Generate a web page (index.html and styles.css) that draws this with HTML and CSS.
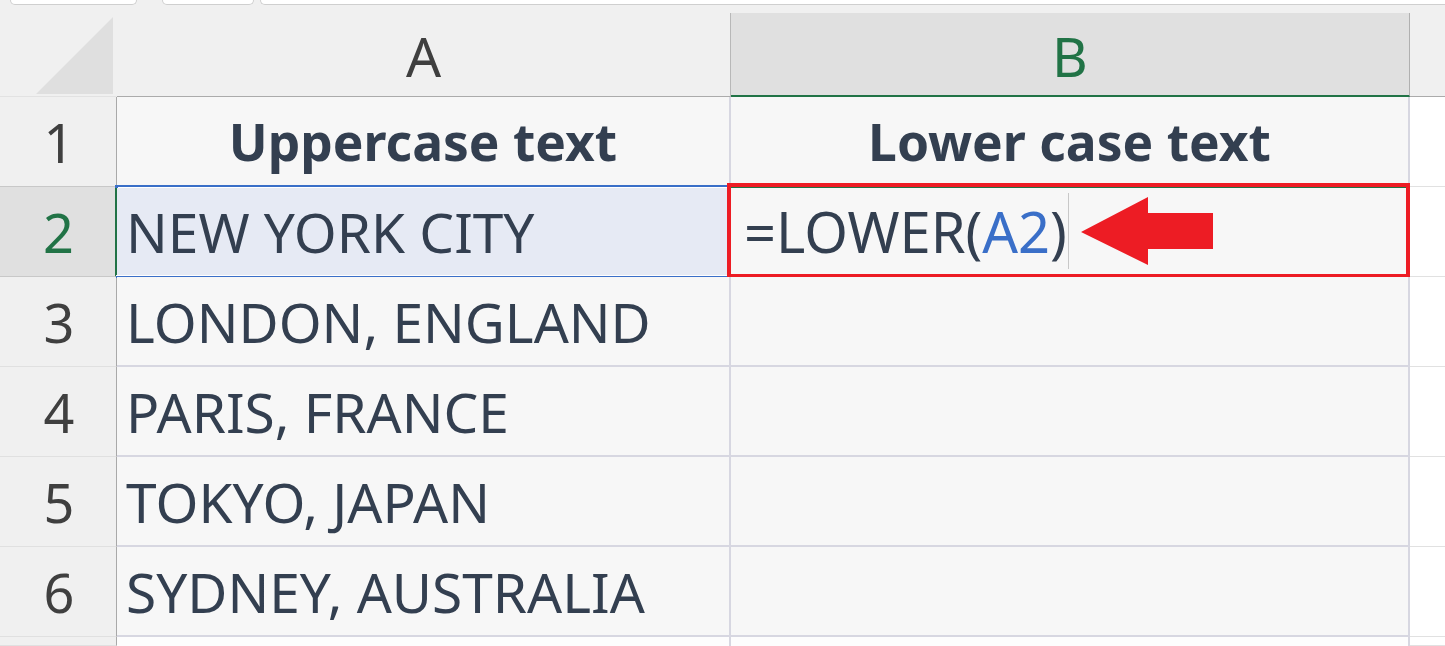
FILE: index.html
```html
<!DOCTYPE html>
<html lang="en">
<head>
<meta charset="utf-8">
<title>LOWER function</title>
<link rel="stylesheet" href="styles.css">
</head>
<body>
<div class="tabs">
  <div class="tab tab-1"></div>
  <div class="tab tab-2"></div>
  <div class="tab tab-3"></div>
</div>
<div class="sheet">
  <div class="corner"><div class="tri"></div></div>
  <div class="colhead">A</div>
  <div class="colhead active">B</div>
  <div class="colhead rest"></div>

  <div class="rowhead">1</div>
  <div class="cell bold center">Uppercase text</div>
  <div class="cell bold center">Lower case text</div>
  <div class="cell out"></div>

  <div class="rowhead active">2</div>
  <div class="cell sel">NEW YORK CITY</div>
  <div class="cell edit">
    <span class="formula">=LOWER(<span class="ref">A2</span>)</span>
    <span class="caret"></span>
    <svg class="arrow" width="132" height="68" viewBox="0 0 132 68"><polygon points="0,35 67,0 67,16 132,16 132,52 67,52 67,68" fill="#ed1c24"/></svg>
  </div>
  <div class="cell out"></div>

  <div class="rowhead">3</div>
  <div class="cell">LONDON, ENGLAND</div>
  <div class="cell"></div>
  <div class="cell out"></div>

  <div class="rowhead">4</div>
  <div class="cell">PARIS, FRANCE</div>
  <div class="cell"></div>
  <div class="cell out"></div>

  <div class="rowhead">5</div>
  <div class="cell">TOKYO, JAPAN</div>
  <div class="cell"></div>
  <div class="cell out"></div>

  <div class="rowhead">6</div>
  <div class="cell">SYDNEY, AUSTRALIA</div>
  <div class="cell"></div>
  <div class="cell out"></div>

  <div class="rowhead"></div>
  <div class="cell blank"></div>
  <div class="cell blank"></div>
  <div class="cell out"></div>
</div>
</body>
</html>
```
FILE: styles.css
```css
* { box-sizing: border-box; }
html, body {
  margin: 0;
  padding: 0;
  background: #f0f0f0;
  overflow: hidden;
  height: 646px;
}
body {
  font-family: "Noto Sans", "Open Sans", sans-serif;
  color: #333f50;
}
.tabs {
  display: flex;
  height: 5px;
  margin-bottom: 8px;
}
.tab {
  height: 5px;
  background: #ffffff;
  border: 1px solid #cfcfcf;
  border-top: none;
  border-radius: 0 0 5px 5px;
}
.tab-1 { margin-left: 10px; width: 127px; }
.tab-2 { margin-left: 25px; width: 92px; }
.tab-3 { margin-left: 6px; flex: 1; border-right: none; border-radius: 0 0 0 5px; }

.sheet {
  display: grid;
  grid-template-columns: 117px 614px 679px 1fr;
  grid-template-rows: 84px repeat(6, 90px) 1fr;
  height: 633px;
}
.corner {
  display: flex;
  justify-content: flex-end;
  align-items: flex-end;
  padding: 0 3px 2px 0;
  border-right: 1px solid transparent;
  border-bottom: 1px solid #e2e2e2;
}
.tri {
  width: 77px;
  height: 77px;
  background: #dfdfdf;
  clip-path: polygon(100% 0, 100% 100%, 0 100%);
}
.colhead {
  display: flex;
  align-items: center;
  justify-content: center;
  font-size: 55px;
  color: #3f3f3f;
  background: #f0f0f0;
  border-right: 1px solid #b8b8b8;
  border-bottom: 1px solid #ababab;
  padding-top: 2px;
}
.colhead.active {
  background: #e0e0e0;
  color: #217346;
  border-bottom: 2px solid #217346;
  border-right-color: #b0b0b0;
}
.colhead.rest { border-right: none; }

.rowhead {
  display: flex;
  align-items: center;
  justify-content: center;
  font-size: 54px;
  color: #3f3f3f;
  background: #f0f0f0;
  border-right: 1px solid #a9a9a9;
  border-bottom: 1px solid #e0e0e0;
  padding-left: 2px;
}
.rowhead.active {
  background: #e0e0e0;
  color: #217346;
  border-right: 2px solid #217346;
  border-bottom-color: #c8c8c8;
}
.sheet > .rowhead:nth-child(5) { border-bottom-color: #c8c8c8; }

.cell {
  position: relative;
  display: flex;
  align-items: center;
  padding-left: 9px;
  font-size: 55px;
  background: #f7f7f7;
  border-right: 2px solid #d7d7e1;
  border-bottom: 2px solid #d7d7e1;
  white-space: nowrap;
}
.cell.bold { font-weight: 700; font-size: 51.5px; }
.cell.center { justify-content: center; padding-left: 0; }
.cell.out {
  background: #ffffff;
  border-right: none;
  border-bottom: 1px solid #e1e1e1;
}
.cell.blank { background: #fdfdfd; border-bottom: none; }

.cell.sel {
  background: #e6eaf4;
}
.cell.sel::before {
  content: "";
  position: absolute;
  left: -1px;
  right: -2px;
  top: -2px;
  bottom: -3px;
  border-top: 2px solid #3a6fc8;
  border-bottom: 2px solid #3a6fc8;
  box-shadow: inset 0 1px 0 #ffffff, inset 0 -1px 0 #ffffff;
}
.cell.sel::after {
  content: "";
  position: absolute;
  left: -2px;
  top: -2px;
  width: 3px;
  height: 3px;
  background: #3a6fc8;
}
.cell.edit {
  padding-left: 13px;
  font-size: 56px;
  box-shadow: inset 0 1px 0 #217346;
}
.cell.edit::after {
  content: "";
  position: absolute;
  left: -4px;
  top: -4px;
  right: -2px;
  bottom: -3px;
  border: 4px solid #ed1c24;
}
.ref { color: #3a6fc8; }
.caret {
  width: 1px;
  height: 76px;
  background: #c8c8c8;
  margin-left: 1px;
}
.arrow {
  margin-left: 12px;
  flex: none;
}
```
